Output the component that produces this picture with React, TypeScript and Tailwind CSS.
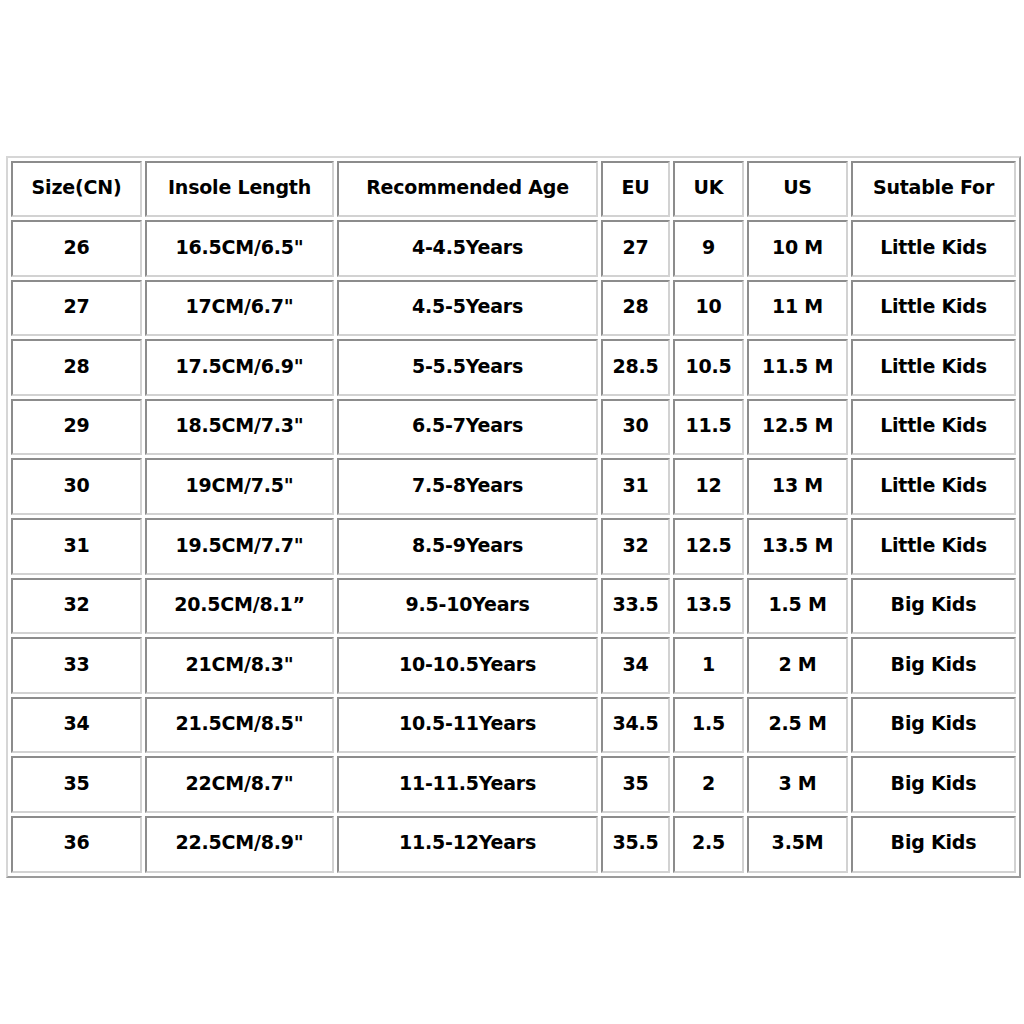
import React from "react";

const headers = ["Size(CN)", "Insole Length", "Recommended Age", "EU", "UK", "US", "Sutable For"];

const rows: string[][] = [
  ["26", "16.5CM/6.5\"", "4-4.5Years", "27", "9", "10 M", "Little Kids"],
  ["27", "17CM/6.7\"", "4.5-5Years", "28", "10", "11 M", "Little Kids"],
  ["28", "17.5CM/6.9\"", "5-5.5Years", "28.5", "10.5", "11.5 M", "Little Kids"],
  ["29", "18.5CM/7.3\"", "6.5-7Years", "30", "11.5", "12.5 M", "Little Kids"],
  ["30", "19CM/7.5\"", "7.5-8Years", "31", "12", "13 M", "Little Kids"],
  ["31", "19.5CM/7.7\"", "8.5-9Years", "32", "12.5", "13.5 M", "Little Kids"],
  ["32", "20.5CM/8.1\u201D", "9.5-10Years", "33.5", "13.5", "1.5 M", "Big Kids"],
  ["33", "21CM/8.3\"", "10-10.5Years", "34", "1", "2 M", "Big Kids"],
  ["34", "21.5CM/8.5\"", "10.5-11Years", "34.5", "1.5", "2.5 M", "Big Kids"],
  ["35", "22CM/8.7\"", "11-11.5Years", "35", "2", "3 M", "Big Kids"],
  ["36", "22.5CM/8.9\"", "11.5-12Years", "35.5", "2.5", "3.5M", "Big Kids"],
];

// measured cell widths, borders included
const colWidths = ["w-[131px]", "w-[189px]", "w-[261px]", "w-[69px]", "w-[71px]", "w-[101px]", "w-[165px]"];

const cellCls =
  "border-2 border-t-[#8c8c8c] border-l-[#8c8c8c] border-r-[#d2d2d2] border-b-[#d2d2d2] text-center align-middle p-0 pb-[3px] whitespace-nowrap";

export default function App() {
  return (
    <div className="w-[1024px] h-[1024px] bg-white pt-[156px] pl-[6px] font-['DejaVu_Sans',sans-serif] font-bold text-black text-[19px] tracking-[-0.2px]">
      <table className="table-fixed w-[1015px] border-separate border-spacing-[3px] border-2 border-t-[#d6d6d6] border-l-[#d6d6d6] border-r-[#9a9a9a] border-b-[#9a9a9a]">
        <colgroup>
          {colWidths.map((w, i) => (
            <col key={i} className={w} />
          ))}
        </colgroup>
        <thead>
          <tr className="h-[56px]">
            {headers.map((h) => (
              <th key={h} className={`${cellCls} font-bold`}>
                {h}
              </th>
            ))}
          </tr>
        </thead>
        <tbody>
          {rows.map((r) => (
            <tr key={r[0]} className="h-[56.6px]">
              {r.map((c, i) => (
                <td key={i} className={cellCls}>
                  {c}
                </td>
              ))}
            </tr>
          ))}
        </tbody>
      </table>
    </div>
  );
}
